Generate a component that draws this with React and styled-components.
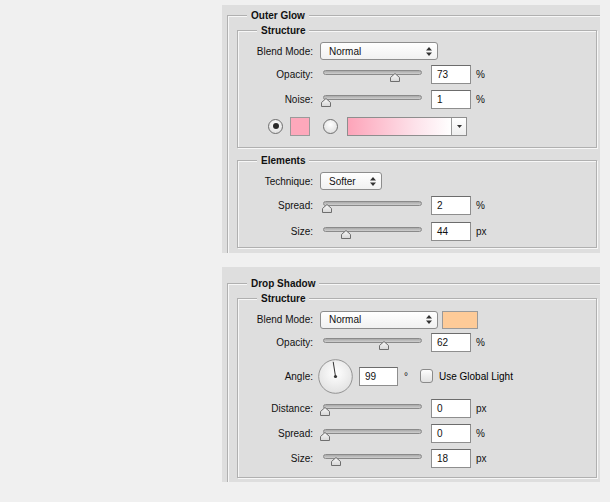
import React from 'react';
import styled, { createGlobalStyle } from 'styled-components';

const PANEL = '#dedede';

const Global = createGlobalStyle`
	body {
		margin: 0;
		background: #f0f0f0;
		font-family: 'Liberation Sans', Arial, sans-serif;
		font-size: 10px;
		color: #111;
	}
`;

const Page = styled.div`
	display: flex;
	flex-direction: column;
	gap: 14px;
	padding: 5px 0 0 222px;
`;

const Panel = styled.div`
	width: 378px;
	height: ${(p) => p.$h}px;
	padding: ${(p) => p.$top}px 0 0 5px;
	box-sizing: border-box;
	background: ${PANEL};
	overflow: hidden;
`;

const Outer = styled.div`
	border-top: 1px solid #b0b0b0;
	border-left: 1px solid #b0b0b0;
	box-shadow: inset 1px 1px 0 #f7f7f7;
	height: 100%;
`;

const Group = styled.div`
	width: 360px;
	box-sizing: border-box;
	margin: ${(p) => p.$mt}px 0 0 9px;
	padding-bottom: ${(p) => p.$pb}px;
	border: 1px solid #b0b0b0;
	box-shadow: inset 1px 1px 0 #f7f7f7, 1px 1px 0 #f7f7f7;
`;

const Legend = styled.div`
	width: max-content;
	margin: -7px 0 0 19px;
	padding: 0 4px;
	line-height: 13px;
	font-weight: bold;
	background: ${PANEL};
`;

const Rows = styled.div`
	margin-top: 4px;
`;

const Row = styled.div`
	display: flex;
	align-items: center;
	height: ${(p) => p.$h}px;
	padding-left: ${(p) => p.$pl || 0}px;
`;

const Label = styled.div`
	width: 75px;
	margin-right: ${(p) => p.$gap || 7}px;
	text-align: right;
	white-space: nowrap;
`;

const Select = styled.div`
	display: flex;
	align-items: center;
	justify-content: space-between;
	width: ${(p) => p.$w}px;
	height: 18px;
	box-sizing: border-box;
	padding: 0 5px 0 8px;
	border: 1px solid #8d8d8d;
	border-radius: 3px;
	background: linear-gradient(#ffffff, #f1f1f1);
`;

const Updown = () => (
	<svg width="6" height="9" viewBox="0 0 6 9">
		<path d="M0 3.5 L3 0 L6 3.5 Z M0 5.5 L3 9 L6 5.5 Z" fill="#333" />
	</svg>
);

const SliderBox = styled.div`
	position: relative;
	width: 102px;
	height: 13px;
`;

const Track = styled.div`
	margin: 2px 0 0 3px;
	width: 99px;
	height: 5px;
	box-sizing: border-box;
	border: 1px solid #8a8a8a;
	border-radius: 3px;
	background: linear-gradient(#a9a9a9, #cfcfcf);
`;

const ThumbSvg = styled.svg`
	position: absolute;
	top: 5px;
	left: ${(p) => p.$pos}px;
`;

const Slider = ({ pos }) => (
	<SliderBox>
		<Track />
		<ThumbSvg $pos={pos} width="10" height="9" viewBox="0 0 10 9">
			<defs>
				<linearGradient id="thumbg" x1="0" y1="0" x2="0" y2="1">
					<stop offset="0" stopColor="#fafafa" />
					<stop offset="1" stopColor="#d6d6d6" />
				</linearGradient>
			</defs>
			<path d="M5 0.5 L9.5 4.5 L9.5 8.5 L0.5 8.5 L0.5 4.5 Z" fill="url(#thumbg)" stroke="#6e6e6e" />
		</ThumbSvg>
	</SliderBox>
);

const NumBox = styled.div`
	display: flex;
	align-items: center;
	width: ${(p) => p.$w || 40}px;
	height: 19px;
	margin-left: ${(p) => p.$ml ?? 9}px;
	padding-left: 5px;
	box-sizing: border-box;
	background: #fff;
	border: 1px solid #8e8e8e;
	border-top-color: #6c6c6c;
`;

const Unit = styled.div`
	margin-left: ${(p) => (p.$small ? 6 : 5)}px;
	font-size: 10px;
`;

const Swatch = styled.div`
	width: ${(p) => p.$w}px;
	height: ${(p) => p.$h}px;
	margin-left: ${(p) => p.$ml}px;
	box-sizing: border-box;
	background: ${(p) => p.$color};
	border: 1px solid #9a9a9a;
`;

const Radio = styled.div`
	display: flex;
	align-items: center;
	justify-content: center;
	width: 15px;
	height: 15px;
	margin-left: ${(p) => p.$ml || 0}px;
	box-sizing: border-box;
	border: 1px solid #6f6f6f;
	border-radius: 50%;
	background: radial-gradient(circle at 50% 35%, #ffffff, #d8d8d8);

	&::after {
		content: '';
		display: ${(p) => (p.$on ? 'block' : 'none')};
		width: 6px;
		height: 6px;
		border-radius: 50%;
		background: #2a2a2a;
	}
`;

const Gradient = styled.div`
	display: flex;
	width: 120px;
	height: 19px;
	margin-left: 9px;
	box-sizing: border-box;
	border: 1px solid #8e8e8e;
`;

const GradFill = styled.div`
	flex: 1;
	background: linear-gradient(to right, #fda4b9, #fde2ea 65%, #ffffff);
`;

const GradButton = styled.div`
	display: flex;
	align-items: center;
	justify-content: center;
	width: 14px;
	border-left: 1px solid #9a9a9a;
	background: linear-gradient(#ffffff, #eeeeee);
`;

const Dial = () => (
	<svg width="35" height="35" viewBox="0 0 35 35" style={{ marginLeft: -1 }}>
		<defs>
			<radialGradient id="dialg" cx="0.5" cy="0.4" r="0.6">
				<stop offset="0" stopColor="#ffffff" />
				<stop offset="1" stopColor="#e2e2e2" />
			</radialGradient>
		</defs>
		<circle cx="17.5" cy="17.5" r="16.8" fill="url(#dialg)" stroke="#8a8a8a" strokeWidth="0.9" />
		<line x1="17.5" y1="17.5" x2="15.2" y2="2.8" stroke="#333" strokeWidth="1" />
		<circle cx="17.5" cy="17.5" r="1.6" fill="#333" />
	</svg>
);

const Check = styled.div`
	width: 13px;
	height: 14px;
	margin-left: 12px;
	box-sizing: border-box;
	border: 1px solid #8a8a8a;
	border-radius: 3px;
	background: linear-gradient(#fdfdfd, #e1e1e1);
`;

const CheckText = styled.div`
	margin-left: 6px;
	font-size: 10px;
	color: #000;
`;

const SliderRow = ({ label, h, pos, value, unit }) => (
	<Row $h={h}>
		<Label>{label}</Label>
		<Slider pos={pos} />
		<NumBox>{value}</NumBox>
		<Unit>{unit}</Unit>
	</Row>
);

export default function App() {
	return (
		<>
			<Global />
			<Page>
				<Panel $h={248} $top={10}>
					<Outer>
						<Legend>Outer Glow</Legend>
						<Group $mt={8} $pb={6}>
							<Legend>Structure</Legend>
							<Rows>
								<Row $h={20}>
									<Label>Blend Mode:</Label>
									<Select $w={118}>
										Normal
										<Updown />
									</Select>
								</Row>
								<SliderRow label="Opacity:" h={26} pos={70} value="73" unit="%" />
								<SliderRow label="Noise:" h={24} pos={1} value="1" unit="%" />
								<Row $h={30} $pl={30}>
									<Radio $on />
									<Swatch $w={20} $h={19} $ml={7} $color="#fda8bb" />
									<Radio $ml={13} />
									<Gradient>
										<GradFill />
										<GradButton>
											<svg width="5" height="3" viewBox="0 0 5 3">
												<path d="M0 0 L5 0 L2.5 3 Z" fill="#333" />
											</svg>
										</GradButton>
									</Gradient>
								</Row>
							</Rows>
						</Group>
						<Group $mt={12} $pb={4}>
							<Legend>Elements</Legend>
							<Rows>
								<Row $h={20}>
									<Label>Technique:</Label>
									<Select $w={62}>
										Softer
										<Updown />
									</Select>
								</Row>
								<SliderRow label="Spread:" h={28} pos={2} value="2" unit="%" />
								<SliderRow label="Size:" h={24} pos={21} value="44" unit="px" />
							</Rows>
						</Group>
					</Outer>
				</Panel>

				<Panel $h={215} $top={16}>
					<Outer>
						<Legend>Drop Shadow</Legend>
						<Group $mt={8} $pb={8}>
							<Legend>Structure</Legend>
							<Rows>
								<Row $h={21}>
									<Label>Blend Mode:</Label>
									<Select $w={118}>
										Normal
										<Updown />
									</Select>
									<Swatch $w={36} $h={18} $ml={4} $color="#fecb98" />
								</Row>
								<SliderRow label="Opacity:" h={25} pos={59} value="62" unit="%" />
								<Row $h={42}>
									<Label $gap={6}>Angle:</Label>
									<Dial />
									<NumBox $w={39} $ml={6}>99</NumBox>
									<Unit $small>°</Unit>
									<Check />
									<CheckText>Use Global Light</CheckText>
								</Row>
								<SliderRow label="Distance:" h={22} pos={0} value="0" unit="px" />
								<SliderRow label="Spread:" h={28} pos={0} value="0" unit="%" />
								<SliderRow label="Size:" h={22} pos={11} value="18" unit="px" />
							</Rows>
						</Group>
					</Outer>
				</Panel>
			</Page>
		</>
	);
}
